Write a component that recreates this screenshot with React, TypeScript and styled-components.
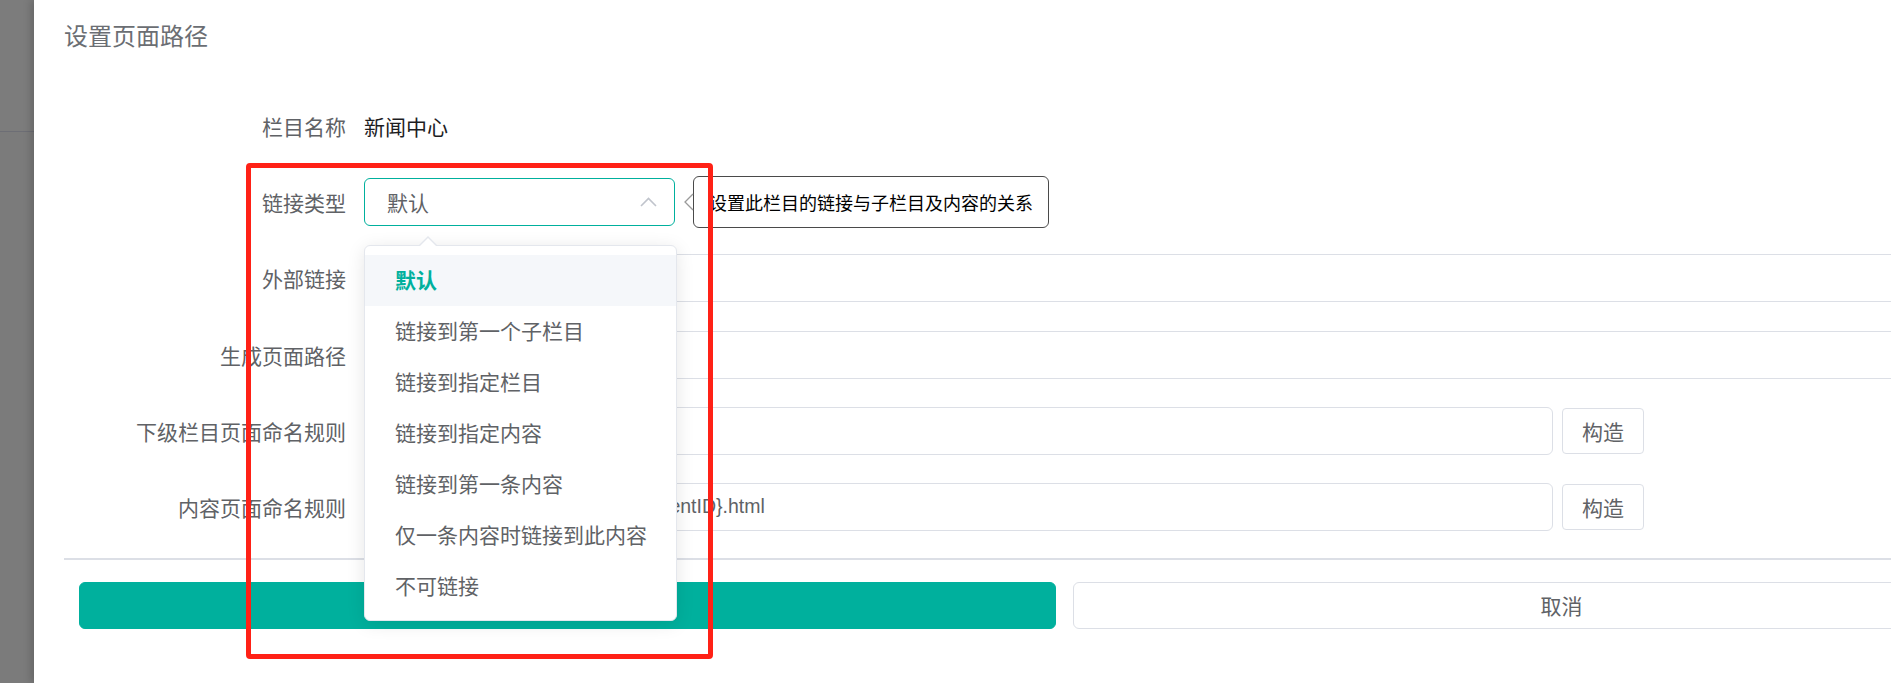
import React from 'react';
import styled, { createGlobalStyle } from 'styled-components';

const GlobalStyle = createGlobalStyle`
  html, body {
    margin: 0;
    padding: 0;
    background: #fff;
    overflow: hidden;
  }
  body {
    font-family: "Liberation Sans", "Noto Sans CJK SC", sans-serif;
  }
  * {
    box-sizing: border-box;
  }
`;

const linkTypes = [
  '默认',
  '链接到第一个子栏目',
  '链接到指定栏目',
  '链接到指定内容',
  '链接到第一条内容',
  '仅一条内容时链接到此内容',
  '不可链接',
];

const App = () => {
  const [linkType, setLinkType] = React.useState('默认');

  return (
    <>
      <GlobalStyle />
      <Page>
        <Mask />
        <Drawer>
          <Title>设置页面路径</Title>
          <Form>
            <Row>
              <Label>栏目名称</Label>
              <Value>新闻中心</Value>
            </Row>
            <Row>
              <Label>链接类型</Label>
              <SelectWrap>
                <Select>
                  <span>{linkType}</span>
                  <svg width="17" height="10" viewBox="0 0 17 10">
                    <polyline points="1,9 8.5,1.5 16,9" fill="none" stroke="#c0c4cc" strokeWidth="1.6" />
                  </svg>
                </Select>
                <Dropdown>
                  {linkTypes.map((t) => (
                    <Option key={t} active={t === linkType} onClick={() => setLinkType(t)}>
                      {t}
                    </Option>
                  ))}
                </Dropdown>
              </SelectWrap>
              <Tip>
                <TipArrow width="10" height="18" viewBox="0 0 10 18">
                  <polyline points="9,1 1,9 9,17" fill="#fff" stroke="#9a9a9a" strokeWidth="1.3" />
                </TipArrow>
                设置此栏目的链接与子栏目及内容的关系
              </Tip>
            </Row>
            <Row>
              <Label>外部链接</Label>
              <Input readOnly value="" />
            </Row>
            <Row>
              <Label>生成页面路径</Label>
              <Input readOnly value="" />
            </Row>
            <Row>
              <Label>下级栏目页面命名规则</Label>
              <Input readOnly width={1189} value="/channels/{@ChannelID}.html" />
              <BuildButton>构造</BuildButton>
            </Row>
            <Row>
              <Label>内容页面命名规则</Label>
              <Input readOnly width={1189} value="/contents/{@ChannelID}/{@ContentID}.html" />
              <BuildButton>构造</BuildButton>
            </Row>
          </Form>
          <Footer>
            <Button primary>确定</Button>
            <Button>取消</Button>
          </Footer>
        </Drawer>
        <Annotation />
      </Page>
    </>
  );
};

const Page = styled.div`
  position: relative;
  display: flex;
  width: 1891px;
  height: 683px;
  overflow: hidden;
`;

const Mask = styled.div`
  flex: 0 0 34px;
  height: 100%;
  background: #7b7b7b;
  border-top: 131px solid #7c7c7c;
  box-shadow: inset 0 1px 0 #6d6e75;
`;

const Drawer = styled.div`
  flex: 0 0 2061px;
  height: 100%;
  background: #fff;
  padding: 25px 30px 0;
  box-shadow: -3px 0 8px rgba(0, 0, 0, 0.18);
`;

const Title = styled.div`
  font-size: 24px;
  line-height: 24px;
  color: #6b6e73;
`;

const Form = styled.div`
  display: flex;
  flex-direction: column;
  gap: 28.2px;
  margin-top: 53px;
`;

const Row = styled.div`
  display: flex;
  align-items: center;
  height: 48px;
`;

const Label = styled.div`
  flex: 0 0 300px;
  padding-right: 18px;
  text-align: right;
  font-size: 21px;
  color: #606266;
`;

const Value = styled.div`
  font-size: 21px;
  color: #1d1d1f;
`;

const SelectWrap = styled.div`
  position: relative;
  width: 311px;
  height: 48px;
`;

const Select = styled.div`
  display: flex;
  align-items: center;
  justify-content: space-between;
  height: 100%;
  padding: 0 17px 0 22px;
  border: 1px solid #00b09d;
  border-radius: 6px;
  font-size: 21px;
  color: #606266;
  cursor: pointer;
`;

const Dropdown = styled.div`
  position: absolute;
  z-index: 10;
  top: 67px;
  left: 0;
  width: 313px;
  padding: 9px 0 8px;
  background: #fff;
  border: 1px solid #e4e7ed;
  border-radius: 6px;
  box-shadow: 0 3px 18px rgba(0, 0, 0, 0.1);

  &::before,
  &::after {
    content: '';
    position: absolute;
    left: 54px;
    border: 9px solid transparent;
    border-top: 0;
  }
  &::before {
    top: -10px;
    border-bottom: 9px solid #e4e7ed;
  }
  &::after {
    top: -8px;
    border-bottom: 9px solid #fff;
  }
`;

const Option = styled.div<{ active?: boolean }>`
  height: 51px;
  line-height: 51px;
  padding: 0 30px;
  font-size: 21px;
  white-space: nowrap;
  color: ${(p) => (p.active ? '#00b09d' : '#606266')};
  font-weight: ${(p) => (p.active ? 700 : 400)};
  background: ${(p) => (p.active ? '#f5f7fa' : 'transparent')};
  cursor: pointer;
`;

const Tip = styled.div`
  position: relative;
  margin-left: 18px;
  height: 52px;
  display: flex;
  align-items: center;
  padding: 0 15px;
  border: 1.5px solid #4a4a4a;
  border-radius: 6px;
  font-size: 18px;
  color: #000;
  white-space: nowrap;
`;

const TipArrow = styled.svg`
  position: absolute;
  left: -10px;
  top: 16px;
`;

const Input = styled.input<{ width?: number }>`
  flex: ${(p) => (p.width ? `0 0 ${p.width}px` : '1')};
  height: 48px;
  padding: 0 22px;
  border: 1px solid #dcdfe6;
  border-radius: 6px;
  outline: none;
  font-family: inherit;
  font-size: 19.5px;
  color: #606266;
  background: #fff;
`;

const BuildButton = styled.button`
  margin-left: 9px;
  width: 82px;
  height: 46px;
  border: 1px solid #dcdfe6;
  border-radius: 4px;
  background: #fff;
  font-family: inherit;
  font-size: 21px;
  color: #606266;
  cursor: pointer;
`;

const Footer = styled.div`
  display: flex;
  gap: 17px;
  margin-top: 27px;
  padding: 22px 15px 0;
  border-top: 2px solid #dcdfe6;
`;

const Button = styled.button<{ primary?: boolean }>`
  flex: 1;
  height: 47px;
  border-radius: 6px;
  border: 1px solid ${(p) => (p.primary ? '#00b09d' : '#dcdfe6')};
  background: ${(p) => (p.primary ? '#00b09d' : '#fff')};
  color: ${(p) => (p.primary ? '#fff' : '#606266')};
  font-family: inherit;
  font-size: 21px;
  cursor: pointer;
`;

const Annotation = styled.div`
  position: absolute;
  z-index: 20;
  left: 246px;
  top: 163px;
  width: 467px;
  height: 496px;
  border: 5px solid #ff2116;
  border-radius: 4px;
  pointer-events: none;
`;

export default App;
